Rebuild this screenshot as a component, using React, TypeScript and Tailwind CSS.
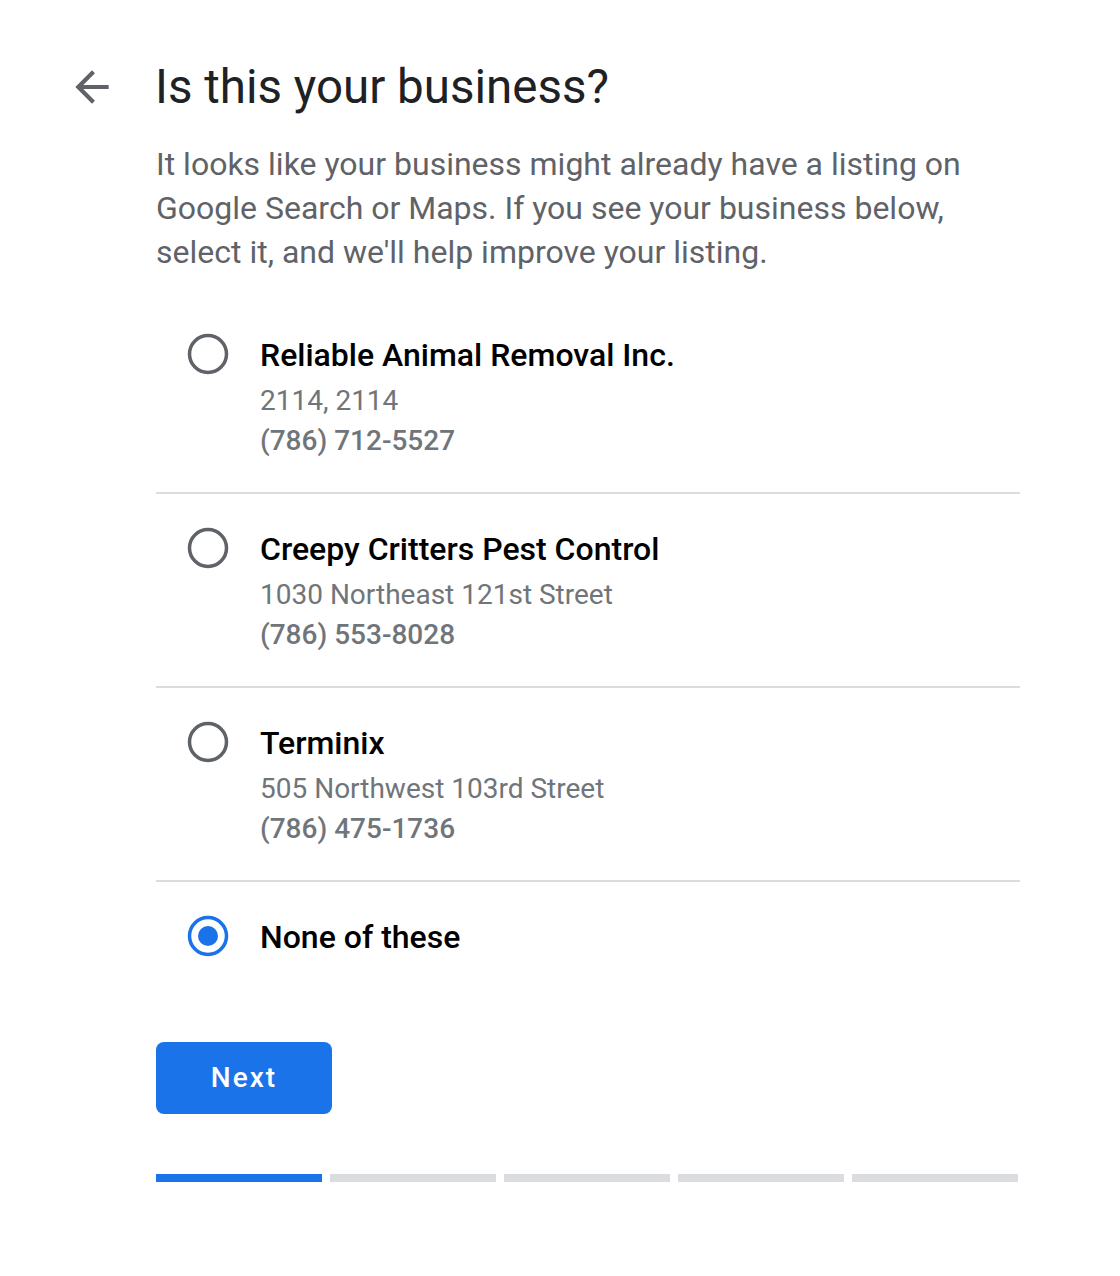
import React, { useState } from 'react';

interface Listing {
  id: string;
  name: string;
  address?: string;
  phone?: string;
}

const listings: Listing[] = [
  { id: 'reliable', name: 'Reliable Animal Removal Inc.', address: '2114, 2114', phone: '(786) 712-5527' },
  { id: 'creepy', name: 'Creepy Critters Pest Control', address: '1030 Northeast 121st Street', phone: '(786) 553-8028' },
  { id: 'terminix', name: 'Terminix', address: '505 Northwest 103rd Street', phone: '(786) 475-1736' },
  { id: 'none', name: 'None of these' },
];

const Radio = ({ checked }: { checked: boolean }) => (
  <svg width="42" height="42" viewBox="0 0 42 42" className="shrink-0 mt-[2px]">
    <circle cx="21" cy="21" r="18.5" fill="none" stroke={checked ? '#1a73e8' : '#5f6368'} strokeWidth="3.5" />
    {checked && <circle cx="21" cy="21" r="10" fill="#1a73e8" />}
  </svg>
);

export default function App() {
  const [selected, setSelected] = useState('none');

  return (
    <div className="min-h-screen bg-white font-['Roboto',_'Liberation_Sans',_sans-serif]">
      <div className="flex pt-[59px]">
        {/* Back arrow */}
        <div className="w-[156px] shrink-0 pl-[67px] pt-[3px]">
          <svg width="50" height="50" viewBox="0 0 24 24">
            <path d="M20 11H7.83l5.59-5.59L12 4l-8 8 8 8 1.41-1.41L7.83 13H20v-2z" fill="#5f6368" />
          </svg>
        </div>

        <div className="w-[864px]">
          <h1 className="text-[47.5px] leading-[56px] text-[#202124] font-normal -ml-[1px]">Is this your business?</h1>
          <p className="mt-[27px] text-[32px] leading-[44px] text-[#5f6368]">
            It looks like your business might already have a listing on Google Search or Maps. If you see your business below, select it, and we'll help improve your listing.
          </p>

          <div className="mt-[26px]">
            {listings.map((item, i) => (
              <div
                key={item.id}
                onClick={() => setSelected(item.id)}
                className={`flex gap-[31px] pl-[31px] pt-[31px] pb-[31px] cursor-pointer ${
                  i < listings.length - 1 ? 'border-b-2 border-[#dadce0]' : ''
                }`}
              >
                <Radio checked={selected === item.id} />
                <div className="flex flex-col">
                  <div className="text-[32px] leading-[48px] font-medium text-black">{item.name}</div>
                  {item.address && (
                    <div className="mt-[2px] text-[28px] leading-[40px] text-[#70757a]">{item.address}</div>
                  )}
                  {item.phone && (
                    <div className="text-[28px] leading-[40px] font-medium text-[#70757a]">{item.phone}</div>
                  )}
                </div>
              </div>
            ))}
          </div>

          <button className="mt-[50px] w-[176px] h-[72px] rounded-[8px] bg-[#1a73e8] text-white text-[28px] font-medium tracking-[2px]">
            Next
          </button>

          <div className="mt-[60px] flex gap-[8px] w-[862px]">
            {[0, 1, 2, 3, 4].map((s) => (
              <div key={s} className={`h-[8px] flex-1 ${s === 0 ? 'bg-[#1a73e8]' : 'bg-[#dadce0]'}`} />
            ))}
          </div>
        </div>
      </div>
    </div>
  );
}
